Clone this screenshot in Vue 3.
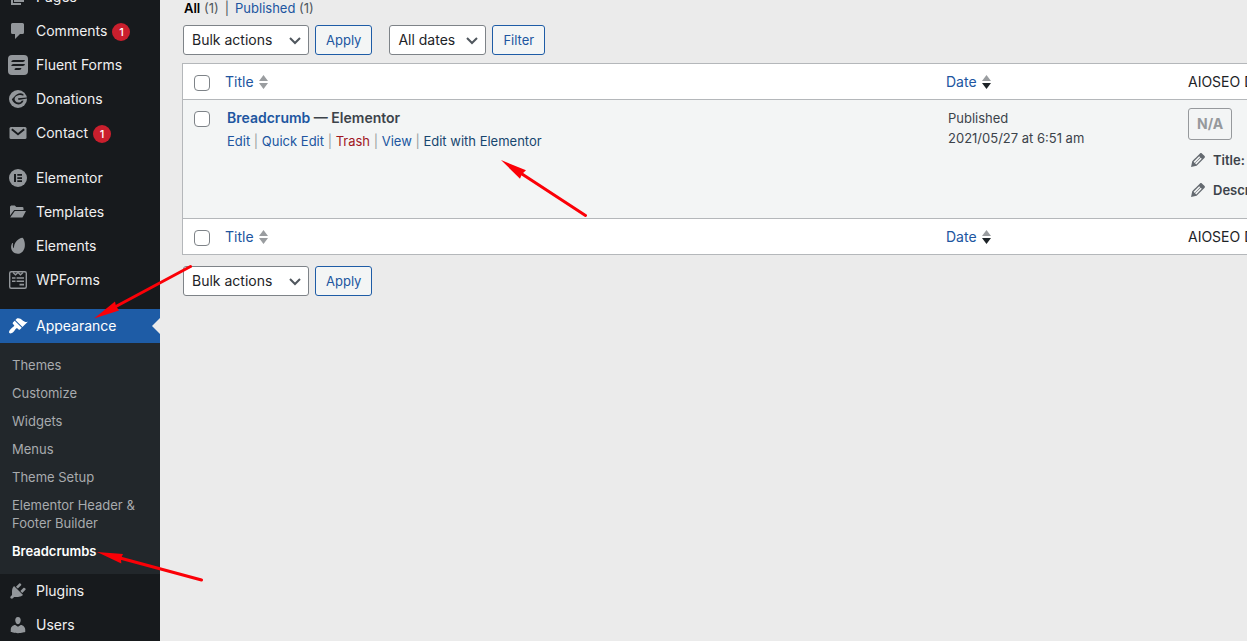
<script setup>
import { ref } from 'vue'

const icons = {
  pages: '<path d="M6 15V2h10v13H6zm-1 1h8v2H3V5h2v11z"/>',
  comments: '<path d="M4.500 2h10q1.500 0 1.500 1.500v8q0 1.500-1.500 1.500H12l-5 5v-5H4.500Q3 13 3 11.500v-8Q3 2 4.500 2z"/>',
  fluent: '<rect width="20" height="20" rx="4"/><g fill="#171a1d"><path d="M5.500 5H17q-.3 2-2.300 2H3.200Q3.500 5 5.500 5zM5.500 9H17q-.3 2-2.300 2H3.200Q3.500 9 5.500 9zM8 13h5.500q-.3 2-2.300 2H6.500q0-2 1.500-2z"/></g>',
  donations: '<circle cx="10" cy="10" r="9"/><path fill="#171a1d" d="M15.500 5.200C12 2.900 8.600 5 6.500 7.500L3.800 10.300C5.500 14.500 9.500 16.800 13 14.800c1.600-.9 2.300-2.200 2.500-3.300l-1.800.2c-.7 1.300-2 2-3.400 1.900C8 13.300 6.600 11.700 6.600 10c0-2 2.200-3.800 4.700-4 1.700-.2 3 .1 4 .7zM10 9.300L19 8.400v1.200l-8.500 1.500z"/>',
  contact: '<path d="M3 4h14q1.500 0 1.500 1.500v9q0 1.500-1.500 1.500H3q-1.500 0-1.500-1.500v-9Q1.500 4 3 4z"/><path d="M3.800 6.300l6.200 5 6.200-5" fill="none" stroke="#171a1d" stroke-width="1.900"/>',
  elementor: '<circle cx="10" cy="10" r="9"/><path fill="#171a1d" d="M6 6h2v8H6zM9.300 6H14v1.700H9.300zM9.300 9.200H14v1.700H9.300zM9.300 12.300H14V14H9.300z"/>',
  templates: '<path d="M2 4.500L3.200 3.500h3.600L8.300 5h6q1.200 0 1.200 1.200V8H6.200L2 13.500z"/><path d="M6.800 9H18l-3.500 6.500H2.200z"/>',
  elements: '<path d="M14.500 1.800c1.500 1 2.800 5.200 2.300 8.600-.5 4.100-3.200 7.300-7 7.300-3.600 0-6.500-2.500-6.700-6.200-.1-1.800.5-3.400 1.200-4.400.3-.4.800-.2.700.3-.5 2.800.2 4.500 1 4.900C5.600 6.900 10.700 1.700 14.500 1.800z"/>',
  wpforms: '<rect x="1.700" y="1.700" width="16.600" height="16.600" rx="1.500" fill="none" stroke="currentColor" stroke-width="1.400"/><path d="M5 2.500l2.500 2.300L10 2.500l2.500 2.300L15 2.500" fill="none" stroke="currentColor" stroke-width="1.300"/><path d="M4 7.200h3.500v1.600H4zM8.600 7.200H16v1.600H8.600zM4 10.400h3.500V12H4zM8.600 10.400H16V12H8.600zM11.500 13.800H16v1.700h-4.500z"/>',
  appearance: '<path d="M14.480 11.060L7.410 3.990l1.500-1.500c.5-.56 2.300-.47 3.510.32 1.210.8 1.430 1.280 2.910 2.100 1.180.64 2.450 1.260 4.450.85zm-.71.71L6.700 4.700 4.930 6.470c-.39.39-.39 1.020 0 1.410l1.060 1.060c.39.39.39 1.030 0 1.420-.6.6-1.430 1.110-2.210 1.690-.35.26-.7.53-1.010.84C1.430 14.230.4 16.080 1.400 17.070c.99 1 2.840-.03 4.180-1.360.31-.31.58-.66.85-1.020.57-.78 1.080-1.610 1.690-2.210.39-.39 1.020-.39 1.410 0l1.060 1.060c.39.39 1.020.39 1.410 0z"/>',
  plugins: '<path d="M13.110 4.360L9.870 7.600 8 5.730l3.240-3.240c.35-.34 1.050-.2 1.560.32.520.51.660 1.210.310 1.550zm-8 1.770l.91-1.120 9.010 9.010-1.190.84c-.71.71-2.630 1.160-3.820 1.160H6.140L4.900 17.260c-.59.59-1.540.59-2.120 0-.59-.58-.59-1.530 0-2.120l1.240-1.240v-3.880c0-1.130.4-3.190 1.090-3.890zm7.260 3.970l3.240-3.240c.34-.35 1.040-.21 1.550.31.52.51.66 1.210.31 1.550l-3.240 3.250z"/>',
  users: '<path d="M10 9.250c-2.270 0-2.730-3.440-2.730-3.440C7 4.020 7.820 2 9.970 2c2.160 0 2.980 2.020 2.710 3.810 0 0-.41 3.440-2.680 3.440zm0 2.570L12.720 10c2.390 0 4.520 2.330 4.520 4.530v2.490s-3.650 1.130-7.240 1.130c-3.650 0-7.240-1.130-7.240-1.130v-2.490c0-2.250 1.940-4.480 4.470-4.480z"/>',
}

const menu = [
  { label: 'Pages', icon: 'pages' },
  { label: 'Comments', icon: 'comments', count: 1 },
  { label: 'Fluent Forms', icon: 'fluent' },
  { label: 'Donations', icon: 'donations' },
  { label: 'Contact', icon: 'contact', count: 1 },
  { label: 'Elementor', icon: 'elementor', gap: true },
  { label: 'Templates', icon: 'templates' },
  { label: 'Elements', icon: 'elements' },
  { label: 'WPForms', icon: 'wpforms' },
  {
    label: 'Appearance', icon: 'appearance', gap: true,
    children: ['Themes', 'Customize', 'Widgets', 'Menus', 'Theme Setup', 'Elementor Header & Footer Builder', 'Breadcrumbs'],
  },
  { label: 'Plugins', icon: 'plugins' },
  { label: 'Users', icon: 'users' },
]

const bulkTop = ref('Bulk actions')
const bulkBottom = ref('Bulk actions')
const dates = ref('All dates')
</script>

<template>
  <div class="admin">
    <nav class="sidebar" aria-label="Main menu">
      <ul class="menu">
        <li v-for="m in menu" :key="m.label" :class="{ gap: m.gap, current: m.children }">
          <a href="#" class="item">
            <svg class="icon" viewBox="0 0 20 20" aria-hidden="true" v-html="icons[m.icon]"></svg>
            <span class="label">{{ m.label }}</span>
            <span v-if="m.count" class="count">{{ m.count }}</span>
          </a>
          <ul v-if="m.children" class="submenu">
            <li v-for="c in m.children" :key="c">
              <a href="#" :class="{ active: c === 'Breadcrumbs' }">{{ c }}</a>
            </li>
          </ul>
        </li>
      </ul>
    </nav>

    <main class="content">
      <div class="views">
        <a href="#" class="all"><b>All</b> <span>(1)</span></a>
        <span class="bar">|</span>
        <a href="#">Published <span>(1)</span></a>
      </div>

      <div class="toolbar">
        <div class="select bulk">
          <select v-model="bulkTop" aria-label="Select bulk action"><option>Bulk actions</option></select>
          <svg viewBox="0 0 12 8" aria-hidden="true"><path d="M1 1l5 5 5-5" /></svg>
        </div>
        <button type="button">Apply</button>
        <div class="select dates">
          <select v-model="dates" aria-label="Filter by date"><option>All dates</option></select>
          <svg viewBox="0 0 12 8" aria-hidden="true"><path d="M1 1l5 5 5-5" /></svg>
        </div>
        <button type="button">Filter</button>
      </div>

      <table>
        <thead>
          <tr>
            <td class="check"><input type="checkbox" aria-label="Select all" /></td>
            <th scope="col"><a href="#" class="sort">Title<svg viewBox="0 0 9 14" aria-hidden="true"><path d="M4.500 0L9 6H0zM0 8h9l-4.500 6z" /></svg></a></th>
            <th scope="col" class="date"><a href="#" class="sort">Date<svg viewBox="0 0 9 14" aria-hidden="true"><path d="M4.500 0L9 6H0z" /><path class="on" d="M0 8h9l-4.500 6z" /></svg></a></th>
            <th scope="col" class="seo">AIOSEO Details</th>
          </tr>
        </thead>
        <tbody>
          <tr>
            <td class="check"><input type="checkbox" aria-label="Select Breadcrumb" /></td>
            <td class="title">
              <strong><a href="#">Breadcrumb</a> — Elementor</strong>
              <div class="actions">
                <a href="#">Edit</a> | <a href="#">Quick Edit</a> | <a href="#" class="trash">Trash</a> | <a href="#">View</a> | <a href="#" class="hover">Edit with Elementor</a>
              </div>
            </td>
            <td class="when">Published<br />2021/05/27 at 6:51 am</td>
            <td class="details">
              <span class="score">N/A</span>
              <div v-for="f in ['Title:', 'Description:']" :key="f" class="field">
                <svg viewBox="0 0 20 20" aria-hidden="true"><path d="M13.890 3.390l2.710 2.720c.46.46.42 1.240.03 1.640l-8.010 8.020-5.560 1.160 1.160-5.580s7.600-7.630 7.990-8.030c.39-.39 1.220-.39 1.680.07zm-2.730 2.790l-5.590 5.610 1.110 1.110 5.540-5.650zm-2.970 8.230l5.580-5.600-1.070-1.080-5.590 5.600z" /></svg>
                <b>{{ f }}</b>
              </div>
            </td>
          </tr>
        </tbody>
        <tfoot>
          <tr>
            <td class="check"><input type="checkbox" aria-label="Select all" /></td>
            <th scope="col"><a href="#" class="sort">Title<svg viewBox="0 0 9 14" aria-hidden="true"><path d="M4.500 0L9 6H0zM0 8h9l-4.500 6z" /></svg></a></th>
            <th scope="col"><a href="#" class="sort">Date<svg viewBox="0 0 9 14" aria-hidden="true"><path d="M4.500 0L9 6H0z" /><path class="on" d="M0 8h9l-4.500 6z" /></svg></a></th>
            <th scope="col">AIOSEO Details</th>
          </tr>
        </tfoot>
      </table>

      <div class="toolbar">
        <div class="select bulk">
          <select v-model="bulkBottom" aria-label="Select bulk action"><option>Bulk actions</option></select>
          <svg viewBox="0 0 12 8" aria-hidden="true"><path d="M1 1l5 5 5-5" /></svg>
        </div>
        <button type="button">Apply</button>
      </div>
    </main>

    <svg class="arrows" width="600" height="600" aria-hidden="true">
      <path class="shaft" d="M585.500 215.500L522 174M190.500 266.500L114 307.500M201.500 580L120 558" />
      <path d="M501 160l25 10.300-4 3.700-2 4.700zM94 318.500l21-17 1 4.500 3 4.500zM97 552l26 2-2 4.500.3 5z" />
    </svg>
  </div>
</template>

<style>
html, body { background: #ebebeb; }
body { overflow: hidden; }
</style>

<style scoped>
.admin {
  position: relative;
  display: flex;
  height: 100vh;
  overflow: hidden;
  background: #ebebeb;
  color: #3c434a;
  font-family: Inter, "Liberation Sans", sans-serif;
  font-size: 13px;
}
a { color: #2055a0; text-decoration: none; }
ul { list-style: none; margin: 0; padding: 0; }

.sidebar { flex: 0 0 160px; background: #171a1d; }
.menu { margin-top: -20px; }
.gap { margin-top: 11px; }
.item {
  position: relative;
  display: flex;
  align-items: center;
  height: 34px;
  padding-left: 8px;
  color: #f0f0f1;
  font-size: 14px;
}
.label { padding-bottom: 2px; }
.icon { width: 20px; height: 20px; margin-right: 8px; color: #93979b; fill: currentColor; }
.count {
  width: 18px;
  height: 18px;
  margin: 2px 0 0 5px;
  border-radius: 9px;
  background: #ca1f2d;
  color: #fff;
  font-size: 11px;
  font-weight: 500;
  line-height: 18px;
  text-align: center;
}
.current { margin-top: 12px; }
.current > .item { background: #1e5ca6; color: #fff; }
.current > .item .icon { color: #fff; }
.current > .item::after {
  content: "";
  position: absolute;
  right: 0;
  top: 9px;
  border: 8px solid transparent;
  border-left-width: 0;
  border-right-color: #ebebeb;
}
.submenu { padding: 8px 0 9px; background: #22272b; }
.submenu a { display: block; padding: 5px 12px; color: #a8abae; line-height: 18px; }
.submenu .active { color: #fff; font-weight: 600; }

.content { flex: 1; min-width: 0; padding-left: 22px; overflow: hidden; }
.views { height: 25px; padding-left: 2px; line-height: 17px; white-space: nowrap; }
.views span { color: #50575e; }
.views b { color: #000; font-weight: 600; }
.views .bar { margin: 0 6px; }
.toolbar { display: flex; gap: 6px; padding-left: 1px; }
.select { display: grid; align-items: center; }
.select > * { grid-area: 1 / 1; }
.select svg {
  width: 12px;
  height: 8px;
  margin: 2px 8px 0 0;
  justify-self: end;
  fill: none;
  stroke: #50575e;
  stroke-width: 2;
  pointer-events: none;
}
.bulk { width: 126px; }
.dates { width: 97px; margin-left: 11px; }
select {
  appearance: none;
  width: 100%;
  height: 30px;
  padding: 0 8px 2px;
  border: 1px solid #7e8388;
  border-radius: 3px;
  background: #fff;
  color: #1d2327;
  font: 14px Inter, "Liberation Sans", sans-serif;
}
button {
  height: 30px;
  padding: 0 10px;
  border: 1px solid #1e5ca6;
  border-radius: 3px;
  background: #f3f5f5;
  color: #2055a0;
  font: 13px Inter, "Liberation Sans", sans-serif;
}

table {
  width: calc(100% + 80px);
  margin: 8px 0 11px;
  table-layout: fixed;
  border: 1px solid #b4b7ba;
  border-spacing: 0;
  background: #fff;
}
th, td { padding: 0 10px; text-align: left; }
thead th, thead td, tfoot th, tfoot td { height: 35px; }
th { color: #1d2327; font-size: 14px; font-weight: 400; white-space: nowrap; }
thead .check { width: 32px; }
.check { box-sizing: border-box; padding: 0 0 0 11px; }
tbody .check { padding: 8px 0 8px 11px; }
.date { width: 222px; }
.seo { width: 128px; }
.sort { display: flex; align-items: center; gap: 5px; }
.sort svg { width: 9px; height: 14px; fill: #9a9da0; }
.sort .on { fill: #1d2327; }
input {
  appearance: none;
  display: block;
  box-sizing: border-box;
  width: 16px;
  height: 16px;
  margin: 3px 0 0;
  border: 1px solid #7e8388;
  border-radius: 4px;
  background: #fff;
}
tbody td {
  height: 102px;
  padding-top: 8px;
  padding-bottom: 8px;
  border: solid #b4b7ba;
  border-width: 1px 0;
  background: #f3f5f5;
  line-height: 20px;
  vertical-align: top;
}
tbody .check { height: 120px; }
tbody .title, tbody .when { padding-left: 12px; }
.title strong { display: block; font-size: 14px; font-weight: 600; }
.actions { margin-top: 4px; color: #9a9da0; line-height: 18px; }
.actions .trash { color: #a01722; }
.actions .hover { color: #16466f; }
.score {
  display: inline-block;
  padding: 0 8px;
  border: 1px solid #96999c;
  border-radius: 3px;
  color: #96999c;
  font-size: 14px;
  font-weight: 700;
  line-height: 30px;
}
.field { display: flex; align-items: center; gap: 5px; height: 30px; }
.details .score { vertical-align: top; margin-bottom: 5px; }
.field svg { width: 20px; height: 20px; fill: #646a70; }
.field b { font-weight: 600; }

.arrows { position: absolute; left: 0; top: 0; fill: #fb0007; pointer-events: none; }
.shaft { stroke: #fb0007; stroke-width: 3; stroke-linecap: round; }
</style>
